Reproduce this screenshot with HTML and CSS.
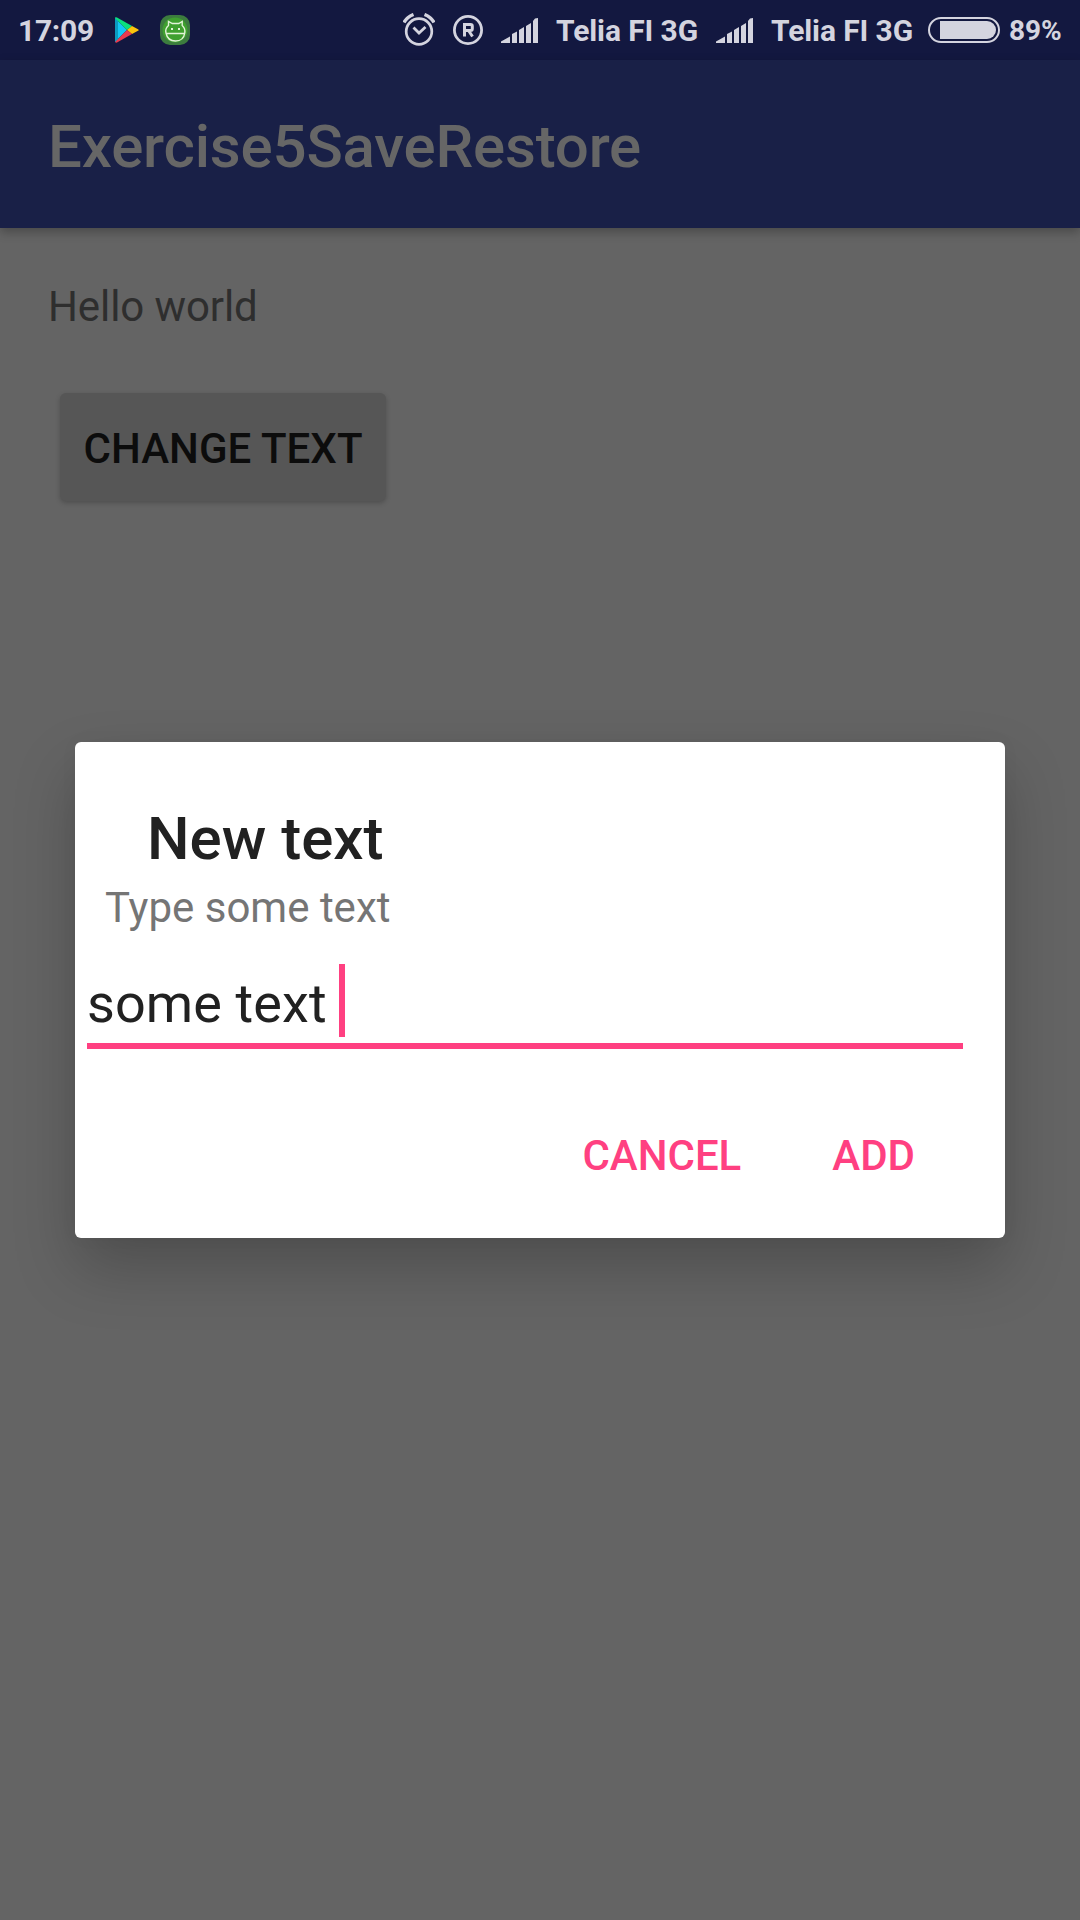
FILE: index.html
```html
<!DOCTYPE html>
<html lang="en">
<head>
<meta charset="utf-8">
<title>Exercise5SaveRestore</title>
<link rel="stylesheet" href="styles.css">
</head>
<body>
<div class="screen">
  <header class="status-bar">
    <span class="clock">17:09</span>
    <svg class="play" width="24" height="26" viewBox="0 0 24 26">
      <path fill="#13c7f5" d="M0 1v24l12-12z"/>
      <path fill="#0a9bc0" d="M0 1l3 1v22l-3 1z"/>
      <path fill="#0be07c" d="M0 0.5Q1 0 2 0.5L17 9l-5 4L0 1z"/>
      <path fill="#fbc40b" d="M17 9l6 3.2q1.500.8 0 1.600L17 17l-5-4z"/>
      <path fill="#ea3a4e" d="M12 13l5 4-15 8.500q-1 .5-2-.5z"/>
    </svg>
    <svg class="droid" width="30" height="30" viewBox="0 0 30 30">
      <rect width="30" height="30" rx="10" fill="#3c7c3e"/>
      <circle cx="15" cy="15" r="12.500" fill="#3fa02f"/>
      <g fill="none" stroke="#e2f3d8" stroke-width="1.400">
        <path d="M8.500 6.500v4C5.500 13 5.500 16 6 18c1 5 4.500 8 9.500 8s8.500-3 9.300-8c.4-3-.3-5.500-2.600-7.500v-4l-3.400 2h-6.500zM6 18.500h18.500"/>
      </g>
      <path fill="#e2f3d8" d="M11 13h2v2h-2zM18 13h2v2h-2z"/>
    </svg>
    <svg class="alarm" width="32" height="33" viewBox="0 0 32 33">
      <g fill="none" stroke="#d4d4df">
        <circle cx="16" cy="18.500" r="12.800" stroke-width="2.700"/>
        <path d="M10.500 14.500l5.500 5.500 6.500-6" stroke-width="2.800"/>
        <path d="M1 9.500Q4 4 10.500 1.500M31 9.500Q28 4 21.500 1.500" stroke-width="3.400"/>
      </g>
    </svg>
    <svg class="roaming" width="30" height="30" viewBox="0 0 30 30">
      <g fill="none" stroke="#d4d4df">
        <circle cx="15" cy="15" r="13.600" stroke-width="2.800"/>
        <path d="M11.500 21.500v-12h6q1.800 0 1.800 1.800v2.400q0 1.800-1.800 1.800h-6M15.500 15.500l4 6" stroke-width="3"/>
      </g>
    </svg>
    <svg class="signal" width="37" height="25" viewBox="0 0 37 25">
      <path fill="#d4d4df" d="M0 25v-1.500l9-5V25zM11 25v-9l5-2.500V25zM18 25V12l5-3v16zM25 25V8l5-3v20zM32 25V3l2-2.500 3-.5v25z"/>
    </svg>
    <span class="carrier">Telia FI 3G</span>
    <svg class="signal" width="37" height="25" viewBox="0 0 37 25">
      <path fill="#d4d4df" d="M0 25v-1.500l9-5V25zM11 25v-9l5-2.500V25zM18 25V12l5-3v16zM25 25V8l5-3v20zM32 25V3l2-2.500 3-.5v25z"/>
    </svg>
    <span class="carrier">Telia FI 3G</span>
    <svg class="battery" width="72" height="26" viewBox="0 0 72 26">
      <rect x="1" y="1" width="70" height="24" rx="12" fill="none" stroke="#d4d4df" stroke-width="2"/>
      <path fill="#d4d4df" d="M12 4h47a9 9 0 0 1 0 18H12z"/>
    </svg>
    <span class="percent">89%</span>
  </header>
  <div class="app-bar"><h1>Exercise5SaveRestore</h1></div>
  <main class="content">
    <p class="message">Hello world</p>
    <button class="change">CHANGE TEXT</button>
  </main>
  <section class="dialog">
    <h2>New text</h2>
    <p class="hint">Type some text</p>
    <div class="field"><span class="value">some text</span><span class="cursor"></span></div>
    <div class="actions">
      <button class="action">CANCEL</button>
      <button class="action">ADD</button>
    </div>
  </section>
</div>
</body>
</html>
```

FILE: styles.css
```css
* { box-sizing: border-box; }
body, h1, h2, p { margin: 0; }
body { font-family: Roboto, sans-serif; background: #646464; }
button { font: inherit; border: 0; padding: 0; background: none; }
svg { display: block; flex: none; }
.screen { position: relative; width: 1080px; height: 1920px; overflow: hidden; background: #646464; }

.status-bar {
  display: flex;
  align-items: flex-start;
  height: 60px;
  padding-left: 18px;
  background: #131840;
  color: #d4d4df;
  font-size: 30px;
  font-weight: 700;
  line-height: 36px;
  letter-spacing: -.1px;
  white-space: nowrap;
}
.clock { width: 97px; padding-top: 13px; letter-spacing: -.3px; }
.play { margin-top: 17px; }
.droid { margin: 15px 0 0 21px; }
.alarm { margin: 13px 0 0 213px; }
.roaming { margin: 15px 0 0 18px; }
.signal { margin: 18px 0 0 18px; }
.carrier { width: 159px; padding: 13px 0 0 18px; }
.carrier + .signal { margin-left: 19px; }
.battery { margin: 17px 0 0 16px; }
.percent { margin: 13px 0 0 9px; font-size: 28px; }

.app-bar {
  position: relative;
  height: 168px;
  padding: 49px 48px 0;
  background: #192047;
  box-shadow: 0 4px 10px rgba(0, 0, 0, .28);
}
.app-bar h1 { color: #666; font-size: 60px; font-weight: 500; line-height: 75px; letter-spacing: -.18px; }

.content { display: flex; flex-direction: column; align-items: flex-start; padding: 55px 48px 0; }
.message { color: #2e2e2e; font-size: 42px; line-height: 48px; letter-spacing: -.1px; }
.change {
  width: 326px;
  height: 108px;
  margin: 62px 0 0 12px;
  padding-top: 3px;
  border-radius: 6px;
  background: #565656;
  box-shadow: 0 2px 5px rgba(0, 0, 0, .22);
  color: #0c0c0c;
  font-size: 42px;
  font-weight: 500;
  letter-spacing: .06px;
}

.dialog {
  position: absolute;
  left: 75px;
  top: 742px;
  width: 930px;
  height: 496px;
  padding-top: 62px;
  border-radius: 6px;
  background: #fff;
  box-shadow: 0 30px 62px rgba(0, 0, 0, .22), 0 0 20px rgba(0, 0, 0, .03);
}
.dialog h2 { padding-left: 72px; color: #212121; font-size: 60px; font-weight: 500; line-height: 70px; }
.hint { margin-top: 9px; padding-left: 30px; color: #757575; font-size: 42px; line-height: 50px; }
.field {
  display: flex;
  width: 876px;
  height: 85px;
  margin: 31px 0 0 12px;
  border-bottom: 6px solid #ff4081;
  color: #212121;
  font-size: 54px;
  line-height: 79px;
}
.value { width: 252px; white-space: nowrap; letter-spacing: .1px; }
.cursor { width: 6px; height: 73px; background: #ff4081; }
.actions { display: flex; justify-content: flex-end; gap: 91px; margin-top: 82px; padding-right: 90px; }
.action { color: #ff4081; font-size: 42px; font-weight: 500; line-height: 50px; }
```
